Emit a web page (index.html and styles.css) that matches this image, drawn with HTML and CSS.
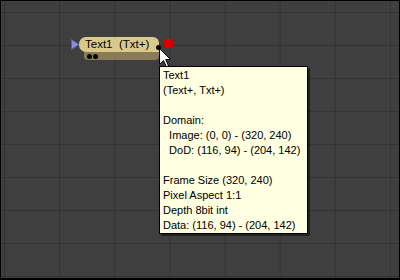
FILE: index.html
```html
<!DOCTYPE html>
<html lang="en">
<head>
    <meta charset="UTF-8">
    <title>Flow - Text1 tooltip</title>
    <link rel="stylesheet" href="styles.css">
</head>
<body>
    <div class="canvas">
        <!-- Tool node -->
        <div class="node">
            <svg class="input" width="9" height="11" viewBox="0 0 9 11">
                <polygon points="0.5,0.5 8,5.5 0.5,10.5" fill="#8d8de0" stroke="#5a5aa8" stroke-width="1"/>
            </svg>
            <div class="node-body">
                <div class="node-title">Text1&nbsp;&nbsp;(Txt+)</div>
                <div class="node-tab">
                    <span class="dot"></span>
                    <span class="dot"></span>
                </div>
                <span class="dot view-dot"></span>
            </div>
            <div class="output"></div>
        </div>

        <!-- Mouse pointer -->
        <svg class="cursor" width="13" height="20" viewBox="0 0 13 20">
            <polygon points="0.5,0.5 0.5,16.5 4.5,12.5 7.5,19 9.5,18 6.8,11.5 11.5,11.5" fill="#fff" stroke="#000" stroke-width="1" stroke-linejoin="miter"/>
        </svg>

        <!-- Tooltip -->
        <div class="tooltip">
            <div>Text1</div>
            <div>(Text+, Txt+)</div>
            <div>&nbsp;</div>
            <div>Domain:</div>
            <div>&nbsp;&nbsp;Image: (0, 0) - (320, 240)</div>
            <div>&nbsp;&nbsp;DoD: (116, 94) - (204, 142)</div>
            <div>&nbsp;</div>
            <div>Frame Size (320, 240)</div>
            <div>Pixel Aspect 1:1</div>
            <div>Depth 8bit int</div>
            <div>Data: (116, 94) - (204, 142)</div>
        </div>
    </div>
</body>
</html>
```

FILE: styles.css
```css
body {
    margin: 0;
    font-family: "Liberation Sans", Arial, sans-serif;
}

.canvas {
    position: relative;
    width: 400px;
    height: 280px;
    box-sizing: border-box;
    border: 1px solid #000;
    border-bottom-width: 2px;
    background-color: #3f3f3f;
    background-image:
        linear-gradient(to right, #333333 1px, transparent 1px),
        linear-gradient(to bottom, #333333 1px, transparent 1px);
    background-size: 55.14px 100%, 100% 33px;
    background-position: 3px 0, 0 11px;
    overflow: hidden;
}

/* node sits on the flow canvas */
.node {
    position: absolute;
    left: 70px;
    top: 36px;
    display: flex;
    align-items: flex-start;
}

.input {
    margin-top: 2px;
    display: block;
}

.node-body {
    position: relative;
    width: 80px;
    margin-left: -1px;
}

.node-title {
    height: 15px;
    line-height: 15px;
    background-color: #d9c98b;
    border-radius: 7px 6px 0 7px;
    padding-left: 6px;
    font-size: 11.5px;
    color: #000;
    white-space: nowrap;
}

.node-tab {
    height: 8px;
    margin-left: 5px;
    background-color: #887b55;
    border-radius: 0 0 4px 4px;
    display: flex;
    align-items: center;
    gap: 1px;
    padding-left: 3px;
}

.dot {
    width: 5px;
    height: 5px;
    border-radius: 50%;
    background-color: #000;
    display: block;
}

.view-dot {
    position: absolute;
    right: -2px;
    top: 8px;
}

.output {
    width: 9px;
    height: 9px;
    margin-top: 2px;
    margin-left: 5px;
    background-color: #d40000;
}

.cursor {
    position: absolute;
    left: 158px;
    top: 47px;
    display: block;
}

.tooltip {
    position: absolute;
    left: 158px;
    top: 65px;
    width: 144px;
    padding: 1px 0 0 3px;
    background-color: #ffffe1;
    border: 1px solid #000;
    box-shadow: 2px 2px 0 rgba(0, 0, 0, 0.45);
    font-size: 11px;
    line-height: 15px;
    color: #000;
    white-space: nowrap;
}
```
